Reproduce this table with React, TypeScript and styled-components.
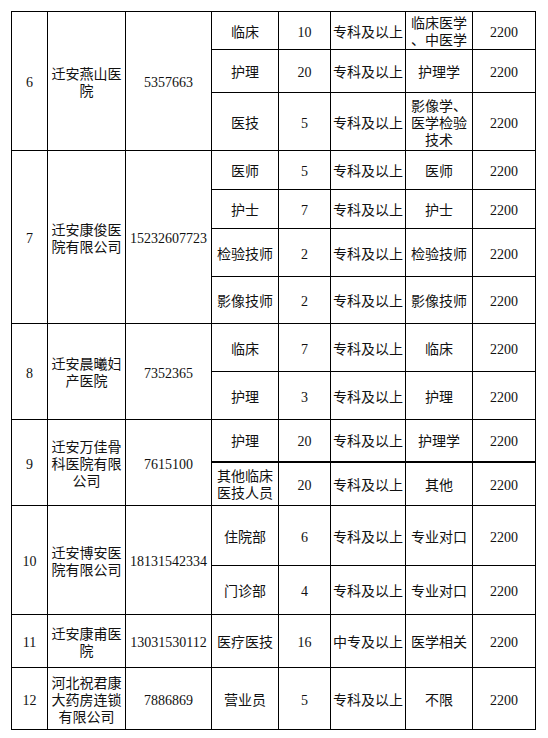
import React from "react";
import styled, { createGlobalStyle } from "styled-components";

const GlobalStyle = createGlobalStyle`
  html, body {
    margin: 0;
    padding: 0;
    background: #fff;
  }
`;

const Wrapper = styled.div`
  width: 548px;
  height: 738px;
  padding: 11px 0 0 11px;
  box-sizing: border-box;
  background: #fff;
`;

const Table = styled.table`
  border-collapse: collapse;
  table-layout: fixed;
  width: 524px;
  font-family: "Liberation Serif", "Noto Sans CJK SC", serif;
  font-size: 14px;
  line-height: 17px;
  color: #111;
`;

const Row = styled.tr<{ $h: number }>`
  height: ${(p) => p.$h}px;
`;

const Cell = styled.td<{ $thick?: boolean }>`
  border: 1px solid #000;
  ${(p) => (p.$thick ? "border-top: 2px solid #000;" : "")}
  padding: 3px 0 0;
  text-align: center;
  vertical-align: middle;
  white-space: pre-line;
  word-break: break-all;
`;

type Post = {
  post: string;
  count: number;
  edu: string;
  major: string;
  h: number;
  thick?: boolean;
};

type Unit = {
  no: number;
  name: string;
  phone: string;
  posts: Post[];
};

const data: Unit[] = [
  {
    no: 6,
    name: "迁安燕山医院",
    phone: "5357663",
    posts: [
      { post: "临床", count: 10, edu: "专科及以上", major: "临床医学\n、中医学", h: 38 },
      { post: "护理", count: 20, edu: "专科及以上", major: "护理学", h: 43 },
      { post: "医技", count: 5, edu: "专科及以上", major: "影像学、\n医学检验\n技术", h: 58 },
    ],
  },
  {
    no: 7,
    name: "迁安康俊医院有限公司",
    phone: "15232607723",
    posts: [
      { post: "医师", count: 5, edu: "专科及以上", major: "医师", h: 39 },
      { post: "护士", count: 7, edu: "专科及以上", major: "护士", h: 39 },
      { post: "检验技师", count: 2, edu: "专科及以上", major: "检验技师", h: 48 },
      { post: "影像技师", count: 2, edu: "专科及以上", major: "影像技师", h: 47 },
    ],
  },
  {
    no: 8,
    name: "迁安晨曦妇产医院",
    phone: "7352365",
    posts: [
      { post: "临床", count: 7, edu: "专科及以上", major: "临床", h: 48 },
      { post: "护理", count: 3, edu: "专科及以上", major: "护理", h: 48 },
    ],
  },
  {
    no: 9,
    name: "迁安万佳骨科医院有限公司",
    phone: "7615100",
    posts: [
      { post: "护理", count: 20, edu: "专科及以上", major: "护理学", h: 42 },
      { post: "其他临床医技人员", count: 20, edu: "专科及以上", major: "其他", h: 44, thick: true },
    ],
  },
  {
    no: 10,
    name: "迁安博安医院有限公司",
    phone: "18131542334",
    posts: [
      { post: "住院部", count: 6, edu: "专科及以上", major: "专业对口", h: 60 },
      { post: "门诊部", count: 4, edu: "专科及以上", major: "专业对口", h: 49 },
    ],
  },
  {
    no: 11,
    name: "迁安康甫医院",
    phone: "13031530112",
    posts: [
      { post: "医疗医技", count: 16, edu: "中专及以上", major: "医学相关", h: 53 },
    ],
  },
  {
    no: 12,
    name: "河北祝君康大药房连锁有限公司",
    phone: "7886869",
    posts: [
      { post: "营业员", count: 5, edu: "专科及以上", major: "不限", h: 62 },
    ],
  },
];

const widths = [36, 78, 86, 67, 52, 75, 67, 63];

export default function App() {
  return (
    <Wrapper>
      <GlobalStyle />
      <Table>
        <colgroup>
          {widths.map((w, i) => (
            <col key={i} style={{ width: w }} />
          ))}
        </colgroup>
        <tbody>
          {data.map((u) =>
            u.posts.map((p, i) => (
              <Row key={`${u.no}-${i}`} $h={p.h}>
                {i === 0 && (
                  <>
                    <Cell rowSpan={u.posts.length}>{u.no}</Cell>
                    <Cell rowSpan={u.posts.length}>{u.name}</Cell>
                    <Cell rowSpan={u.posts.length}>{u.phone}</Cell>
                  </>
                )}
                <Cell $thick={p.thick}>{p.post}</Cell>
                <Cell $thick={p.thick}>{p.count}</Cell>
                <Cell $thick={p.thick}>{p.edu}</Cell>
                <Cell $thick={p.thick}>{p.major}</Cell>
                <Cell $thick={p.thick}>2200</Cell>
              </Row>
            ))
          )}
        </tbody>
      </Table>
    </Wrapper>
  );
}
